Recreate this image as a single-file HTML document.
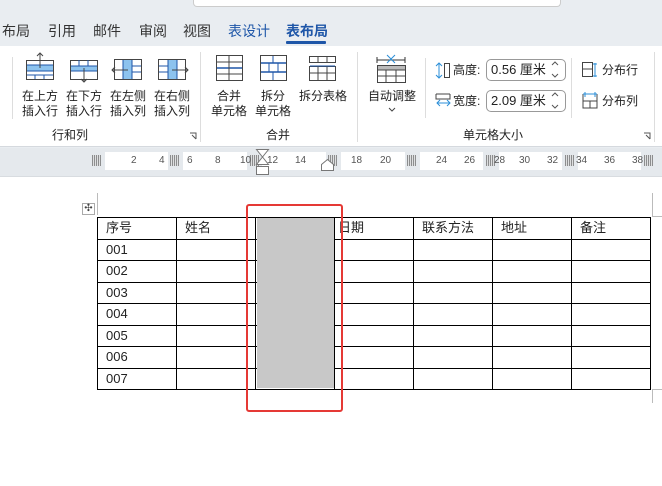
<!DOCTYPE html>
<html><head><meta charset="utf-8"><style>
*{margin:0;padding:0;box-sizing:border-box}
body{width:662px;height:486px;overflow:hidden;background:#fff;font-family:"Liberation Sans","Noto Sans CJK SC",sans-serif;position:relative;color:#222}
.a{position:absolute}
.tab{position:absolute;top:21px;font-size:14px;color:#333;white-space:nowrap}
.lbl{position:absolute;font-size:12px;line-height:15px;text-align:center;color:#222;white-space:nowrap}
.rn{position:absolute;top:155px;font-size:10px;color:#555}
.hatch{position:absolute;top:155px;width:9px;height:11px;background:repeating-linear-gradient(90deg,#777 0 1px,#ddd 1px 2px),#999;opacity:.8}
.wseg{position:absolute;top:152px;height:18px;background:#fff}
table{position:absolute;left:97px;top:217px;border-collapse:collapse;font-size:13px}
td{border:1.3px solid #000;height:21.5px;padding:0 0 0 8px;vertical-align:middle;line-height:14px}
.box{position:absolute;border:1px solid #999;border-radius:5px;background:#fff;font-size:13px;line-height:20px;padding:0 0 0 4px;height:22px;width:80px}
</style></head><body>
<div class="a" style="left:0;top:0;width:662px;height:148px;background:#e9edf1"></div>
<div class="a" style="left:193px;top:0;width:368px;height:7px;background:#fff;border:1px solid #ccc;border-top:none;border-radius:0 0 4px 4px"></div>
<div class="tab" style="left:2px">布局</div>
<div class="tab" style="left:48px">引用</div>
<div class="tab" style="left:93px">邮件</div>
<div class="tab" style="left:139px">审阅</div>
<div class="tab" style="left:183px">视图</div>
<div class="tab" style="left:228px;color:#1e56a8">表设计</div>
<div class="tab" style="left:286px;color:#1e56a8;font-weight:bold">表布局</div>
<div class="a" style="left:286px;top:41px;width:40px;height:3px;background:#1e56a8;border-radius:1px"></div>
<div class="a" style="left:0;top:46px;width:662px;height:101px;background:#fff;border-bottom:1px solid #d5d9de"></div>
<div class="a" style="left:12px;top:57px;width:1px;height:62px;background:#ddd"></div>
<div class="a" style="left:200px;top:52px;width:1px;height:90px;background:#ddd"></div>
<div class="a" style="left:357px;top:52px;width:1px;height:90px;background:#ddd"></div>
<div class="a" style="left:425px;top:58px;width:1px;height:60px;background:#ddd"></div>
<div class="a" style="left:571px;top:58px;width:1px;height:60px;background:#ddd"></div>
<div class="a" style="left:654px;top:52px;width:1px;height:90px;background:#ddd"></div>
<svg class="a" style="left:0;top:46px" width="662" height="100" viewBox="0 46 662 100" fill="none" stroke="#444" stroke-width="1">
<rect x="26.5" y="60.5" width="27" height="19" /><rect x="27" y="65" width="26" height="6" fill="#8dc3ee" stroke="none"/><path d="M27 65H53M27 71H53M27 75H53M35 75V79M44 75V79" stroke="#1e56a8"/><path d="M40 53V68M37 56L40 53L43 56" />
<rect x="70.5" y="60.5" width="27" height="19"/><rect x="71" y="66" width="26" height="5" fill="#8dc3ee" stroke="none"/><path d="M71 66H97M71 71H97M79 60V66M88 60V66" stroke="#1e56a8"/><path d="M84 68V82M81 79L84 82L87 79"/>
<rect x="114.5" y="59.5" width="27" height="20"/><rect x="123" y="60" width="9" height="19" fill="#8dc3ee" stroke="none"/><path d="M123 60V79M132 60V79M132 66H141M132 72H141" stroke="#1e56a8"/><path d="M112 70H128M115 67L112 70L115 73"/>
<rect x="158.5" y="59.5" width="27" height="20"/><rect x="168" y="60" width="9" height="19" fill="#8dc3ee" stroke="none"/><path d="M168 60V79M177 60V79M159 66H168M159 72H168" stroke="#1e56a8"/><path d="M172 70H188M185 67L188 70L185 73"/>
<rect x="216.5" y="55.5" width="26" height="25"/><path d="M217 68H242" stroke="#1e56a8" stroke-width="1.5"/><path d="M229 56V68M229 68V80"/><path d="M217 62H242M217 74H242"/>
<rect x="260.5" y="55.5" width="26" height="25"/><path d="M261 63H286M261 72H286" stroke="#1e56a8" stroke-width="1.5"/><path d="M269 63V72M278 63V72M273 56V63M273 72V80" stroke="#1e56a8"/>
<rect x="309.5" y="56.5" width="26" height="6"/><rect x="309.5" y="66.5" width="26" height="14"/><path d="M310 66H335" stroke="#1e56a8"/><path d="M318 57V62M327 57V62M310 73H335M318 67V80M327 67V80"/>
<path d="M377 57V63M377 60H405M405 57V63" stroke="#333"/><path d="M387 55L395 63M395 55L387 63" stroke="#2b8fd8"/>
<rect x="377.5" y="65.5" width="28" height="17"/><rect x="378" y="66" width="27" height="4" fill="#bbb" stroke="none"/><path d="M378 70H405M378 76H405M386 70V82M396 70V82"/>
<path d="M389 108L392 111L395 108"/>
<path d="M439 63V78M436 66L439 63L442 66M436 75L439 78L442 75" stroke="#2b8fd8"/><rect x="444.5" y="63.5" width="5" height="14"/>
<path d="M436 94V99H450V94M436 94H450" /><path d="M437 103H450M440 100L437 103L440 106M447 100L450 103L447 106" stroke="#2b8fd8"/>
<path d="M553 65L555 63L557 65M553 74L555 76L557 74M553 96L555 94L557 96M553 105L555 107L557 105" stroke="#555"/>
<rect x="582.5" y="62.5" width="10" height="14"/><path d="M583 69H592"/><path d="M595 63V77M593 64H597M593 76H597" stroke="#2b8fd8"/>
<path d="M583 94V108H597V94M583 101H597M590 101V108" /><path d="M583 94H597M585 92V97M595 92V97" stroke="#2b8fd8"/>
<path d="M190 133H196V139M192 135L196 139" stroke="#555"/>
<path d="M644 133H650V139M646 135L650 139" stroke="#555"/>
</svg>
<div class="lbl" style="left:20px;top:89px;width:40px">在上方<br>插入行</div>
<div class="lbl" style="left:64px;top:89px;width:40px">在下方<br>插入行</div>
<div class="lbl" style="left:108px;top:89px;width:40px">在左侧<br>插入列</div>
<div class="lbl" style="left:152px;top:89px;width:40px">在右侧<br>插入列</div>
<div class="lbl" style="left:50px;top:128px;width:40px">行和列</div>
<div class="lbl" style="left:209px;top:89px;width:40px">合并<br>单元格</div>
<div class="lbl" style="left:253px;top:89px;width:40px">拆分<br>单元格</div>
<div class="lbl" style="left:298px;top:89px;width:50px">拆分表格</div>
<div class="lbl" style="left:258px;top:128px;width:40px">合并</div>
<div class="lbl" style="left:366px;top:89px;width:52px">自动调整</div>
<div class="lbl" style="left:455px;top:128px;width:76px">单元格大小</div>
<div class="lbl" style="left:453px;top:63px">高度:</div>
<div class="lbl" style="left:453px;top:94px">宽度:</div>
<div class="box" style="left:486px;top:59px">0.56 厘米</div>
<div class="box" style="left:486px;top:90px">2.09 厘米</div>
<svg class="a" style="left:0;top:0" width="662" height="150" fill="none" stroke="#555"><path d="M552 65L555 62L558 65M552 74L555 77L558 74M552 96L555 93L558 96M552 105L555 108L558 105"/></svg>
<div class="lbl" style="left:602px;top:63px">分布行</div>
<div class="lbl" style="left:602px;top:94px">分布列</div>
<div class="a" style="left:0;top:148px;width:662px;height:29px;background:#e5e9ed;border-bottom:1px solid #d8dce0"></div>
<div class="wseg" style="left:105px;width:63px"></div>
<div class="wseg" style="left:183px;width:64px"></div>
<div class="wseg" style="left:262px;width:64px"></div>
<div class="wseg" style="left:341px;width:64px"></div>
<div class="wseg" style="left:420px;width:63px"></div>
<div class="wseg" style="left:499px;width:63px"></div>
<div class="wseg" style="left:578px;width:63px"></div>
<div class="hatch" style="left:92px"></div><div class="hatch" style="left:170px"></div><div class="hatch" style="left:250px"></div><div class="hatch" style="left:328px"></div><div class="hatch" style="left:407px"></div><div class="hatch" style="left:486px"></div><div class="hatch" style="left:565px"></div><div class="hatch" style="left:644px"></div>
<div class="rn" style="left:131px">2</div><div class="rn" style="left:159px">4</div><div class="rn" style="left:187px">6</div><div class="rn" style="left:215px">8</div><div class="rn" style="left:240px">10</div><div class="rn" style="left:267px">12</div><div class="rn" style="left:295px">14</div><div class="rn" style="left:351px">18</div><div class="rn" style="left:380px">20</div><div class="rn" style="left:436px">24</div><div class="rn" style="left:464px">26</div><div class="rn" style="left:494px">28</div><div class="rn" style="left:519px">30</div><div class="rn" style="left:547px">32</div><div class="rn" style="left:576px">34</div><div class="rn" style="left:604px">36</div><div class="rn" style="left:632px">38</div>
<svg class="a" style="left:255px;top:148px" width="16" height="30" fill="#fff" stroke="#777"><path d="M1.5 1.5H13.5L7.5 9ZM7.5 9L1.5 16.5H13.5Z"/><rect x="1.5" y="18.5" width="12" height="8"/></svg>
<svg class="a" style="left:320px;top:158px" width="16" height="14" fill="#fff" stroke="#777"><path d="M1.5 12.5V6.5L7.5 1.5L13.5 6.5V12.5Z"/></svg>
<div class="a" style="left:97px;top:193px;width:1px;height:22px;background:#bbb"></div>
<div class="a" style="left:652px;top:193px;width:1px;height:23px;background:#bbb"></div>
<div class="a" style="left:652px;top:216px;width:10px;height:1px;background:#bbb"></div>
<div class="a" style="left:652px;top:389px;width:1px;height:14px;background:#bbb"></div>
<div class="a" style="left:652px;top:389px;width:10px;height:1px;background:#bbb"></div>
<div class="a" style="left:82px;top:203px;width:13px;height:12px;border:1px solid #aaa;font-size:10px;line-height:10px;text-align:center;color:#444">✣</div>
<table>
<colgroup><col style="width:79px"><col style="width:79px"><col style="width:79px"><col style="width:79px"><col style="width:79px"><col style="width:79px"><col style="width:79px"></colgroup>
<tr><td>序号</td><td>姓名</td><td></td><td style="padding-left:3px">日期</td><td>联系方法</td><td>地址</td><td>备注</td></tr>
<tr><td>001</td><td></td><td></td><td></td><td></td><td></td><td></td></tr>
<tr><td>002</td><td></td><td></td><td></td><td></td><td></td><td></td></tr>
<tr><td>003</td><td></td><td></td><td></td><td></td><td></td><td></td></tr>
<tr><td>004</td><td></td><td></td><td></td><td></td><td></td><td></td></tr>
<tr><td>005</td><td></td><td></td><td></td><td></td><td></td><td></td></tr>
<tr><td>006</td><td></td><td></td><td></td><td></td><td></td><td></td></tr>
<tr><td>007</td><td></td><td></td><td></td><td></td><td></td><td></td></tr>
</table>
<div class="a" style="left:257px;top:218px;width:77px;height:170px;background:#c8c8c8"></div>
<div class="a" style="left:246px;top:204px;width:97px;height:208px;border:2px solid #e53935;border-radius:3px"></div>
</body></html>
